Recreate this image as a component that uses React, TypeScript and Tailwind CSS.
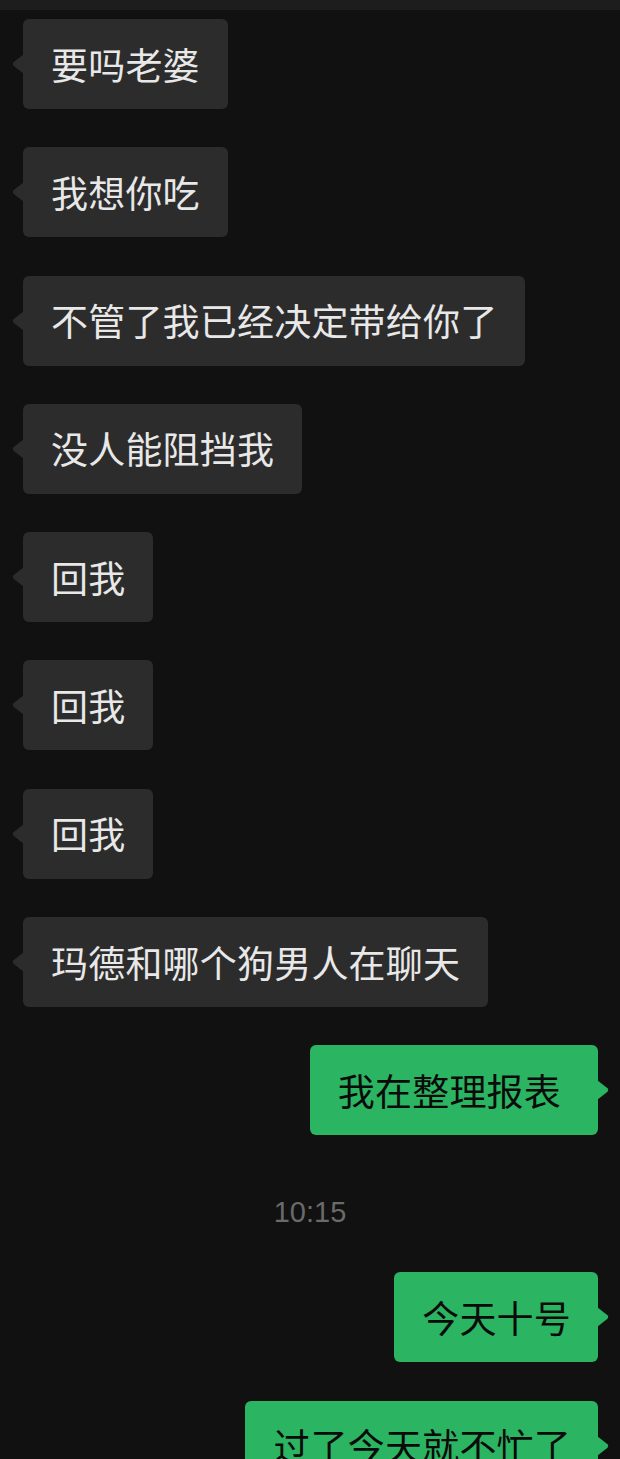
import React from 'react';

type Msg =
  | { kind: 'in'; text: string }
  | { kind: 'out'; text: string; extraRight?: boolean }
  | { kind: 'time'; text: string };

const messages: Msg[] = [
  { kind: 'in', text: '要吗老婆' },
  { kind: 'in', text: '我想你吃' },
  { kind: 'in', text: '不管了我已经决定带给你了' },
  { kind: 'in', text: '没人能阻挡我' },
  { kind: 'in', text: '回我' },
  { kind: 'in', text: '回我' },
  { kind: 'in', text: '回我' },
  { kind: 'in', text: '玛德和哪个狗男人在聊天' },
  { kind: 'out', text: '我在整理报表', extraRight: true },
  { kind: 'time', text: '10:15' },
  { kind: 'out', text: '今天十号' },
  { kind: 'out', text: '过了今天就不忙了' },
];

const font = { fontFamily: '"Noto Sans CJK SC", "Noto Sans", sans-serif' };

function Tail({ side, color }: { side: 'left' | 'right'; color: string }) {
  return (
    <svg
      width="12"
      height="20"
      viewBox="0 0 12 20"
      className={
        side === 'left'
          ? 'absolute -left-[11px] top-1/2 -translate-y-1/2'
          : 'absolute -right-[11px] top-1/2 -translate-y-1/2 -scale-x-100'
      }
    >
      <path d="M12 0 L1.5 8.3 Q0 10 1.5 11.7 L12 20 Z" fill={color} />
    </svg>
  );
}

export default function App() {
  return (
    <div className="h-[1459px] overflow-hidden bg-[#111111]" style={font}>
      {/* status strip */}
      <div className="h-[10px] bg-[#1d1d1d]" />

      <div className="flex flex-col pt-[9px]">
        {messages.map((m, i) => {
          if (m.kind === 'time') {
            return (
              <div
                key={i}
                className="mt-[57px] mb-[40px] h-[40px] flex items-center justify-center text-[29px] text-[#6a6a6a]"
                style={{ fontFamily: '"Liberation Sans", Arial, sans-serif' }}
              >
                {m.text}
              </div>
            );
          }

          const prev = messages[i - 1];
          const gap = i === 0 || prev?.kind === 'time' ? '' : 'mt-[38.3px]';

          if (m.kind === 'in') {
            return (
              <div key={i} className={`flex pl-[23px] ${gap}`}>
                <div className="relative h-[90px] flex items-center pl-[28px] pr-[28px] rounded-[6px] bg-[#2c2c2c] text-[37px] leading-none text-[#e8e8e8] tracking-[0.2px]">
                  <Tail side="left" color="#2c2c2c" />
                  {m.text}
                </div>
              </div>
            );
          }

          return (
            <div key={i} className={`flex justify-end pr-[22px] ${gap}`}>
              <div
                className={
                  'relative h-[90px] flex items-center pl-[28px] rounded-[6px] bg-[#2bb461] text-[37px] leading-none text-[#0b0b0b] tracking-[0.2px] ' +
                  (m.extraRight ? 'pr-[37px]' : 'pr-[27px]')
                }
              >
                <Tail side="right" color="#2bb461" />
                {m.text}
              </div>
            </div>
          );
        })}
      </div>
    </div>
  );
}
